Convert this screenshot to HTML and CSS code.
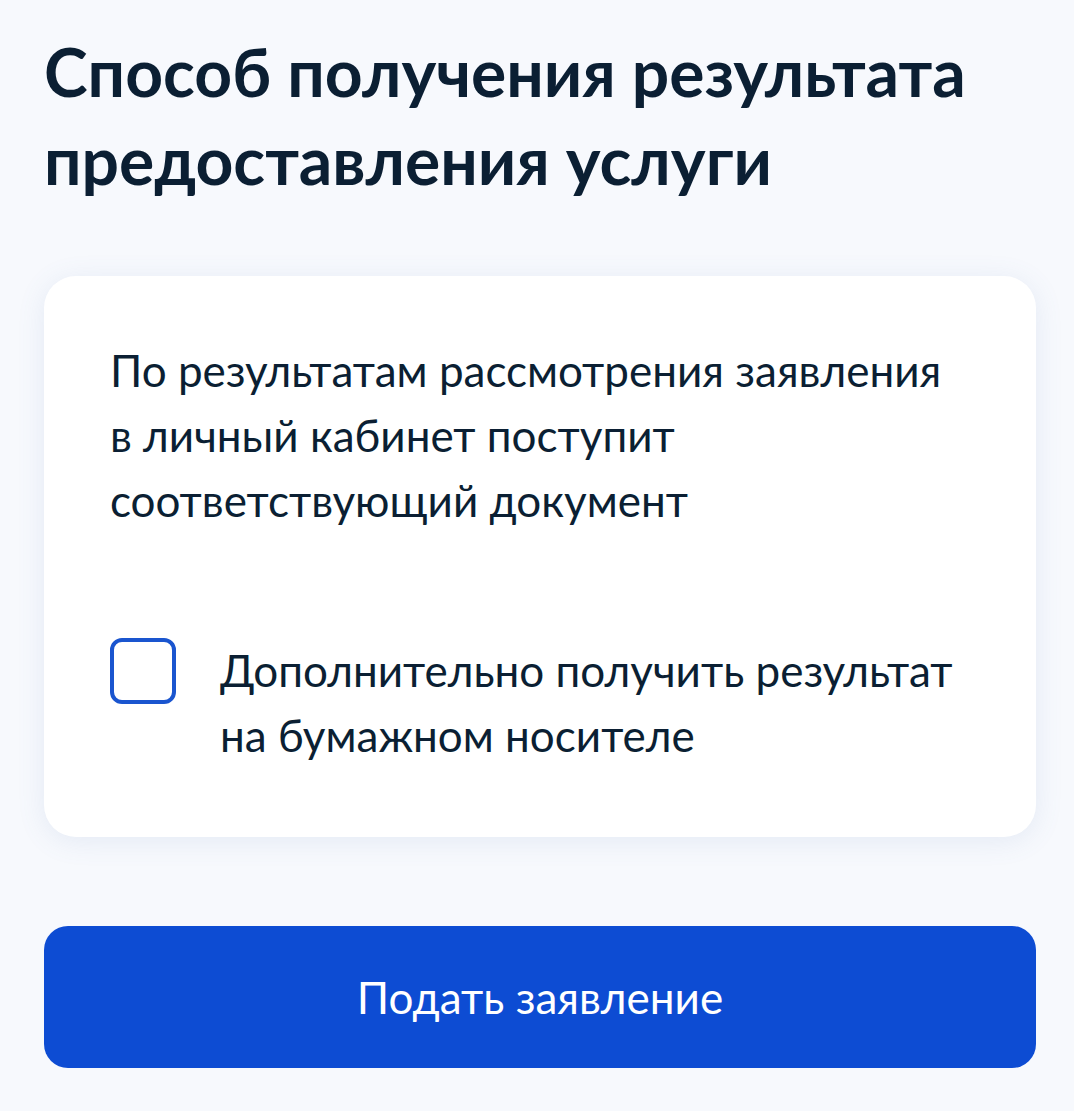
FILE: index.html
```html
<!DOCTYPE html>
<html lang="ru">
<head>
    <meta charset="UTF-8">
    <meta name="viewport" content="width=device-width, initial-scale=1.0">
    <title>Способ получения результата</title>
    <link rel="stylesheet" href="styles.css">
</head>
<body>
    <div class="page">
        <h1 class="title">Способ получения результата предоставления услуги</h1>

        <div class="card">
            <p class="card-text">По результатам рассмотрения заявления в&nbsp;личный кабинет поступит соответствующий документ</p>

            <label class="check">
                <input type="checkbox" class="check-input">
                <span class="check-box"></span>
                <span class="check-label">Дополнительно получить результат на&nbsp;бумажном носителе</span>
            </label>
        </div>

        <button class="btn">Подать заявление</button>
    </div>
</body>
</html>
```

FILE: styles.css
```css
/* Reset and global styles */
* {
    margin: 0;
    padding: 0;
    box-sizing: border-box;
}

body {
    font-family: Lato, "Noto Sans", sans-serif;
    background-color: #f7f9fd;
    color: #0b1f33;
}

.page {
    padding: 28px 38px 0 44px;
    display: flex;
    flex-direction: column;
}

/* Title */
.title {
    font-size: 66px;
    line-height: 88px;
    font-weight: 700;
    color: #0b1f33;
}

/* Card */
.card {
    margin-top: 72px;
    background-color: #ffffff;
    border-radius: 32px;
    box-shadow: 0 4px 28px rgba(90, 120, 180, 0.12);
    padding: 62px 50px 69px 66px;
}

.card-text {
    font-size: 44px;
    line-height: 65px;
    max-width: 860px;
}

/* Checkbox row */
.check {
    display: flex;
    align-items: flex-start;
    gap: 44px;
    margin-top: 105px;
    cursor: pointer;
}

.check-input {
    display: none;
}

.check-box {
    flex: 0 0 66px;
    width: 66px;
    height: 66px;
    border: 4px solid #1a55cf;
    border-radius: 12px;
}

.check-label {
    font-size: 44px;
    line-height: 65px;
}

/* Button */
.btn {
    margin-top: 89px;
    height: 142px;
    border: none;
    border-radius: 24px;
    background-color: #0d4cd3;
    color: #ffffff;
    font-family: Lato, "Noto Sans", sans-serif;
    font-size: 44px;
    cursor: pointer;
}
```
